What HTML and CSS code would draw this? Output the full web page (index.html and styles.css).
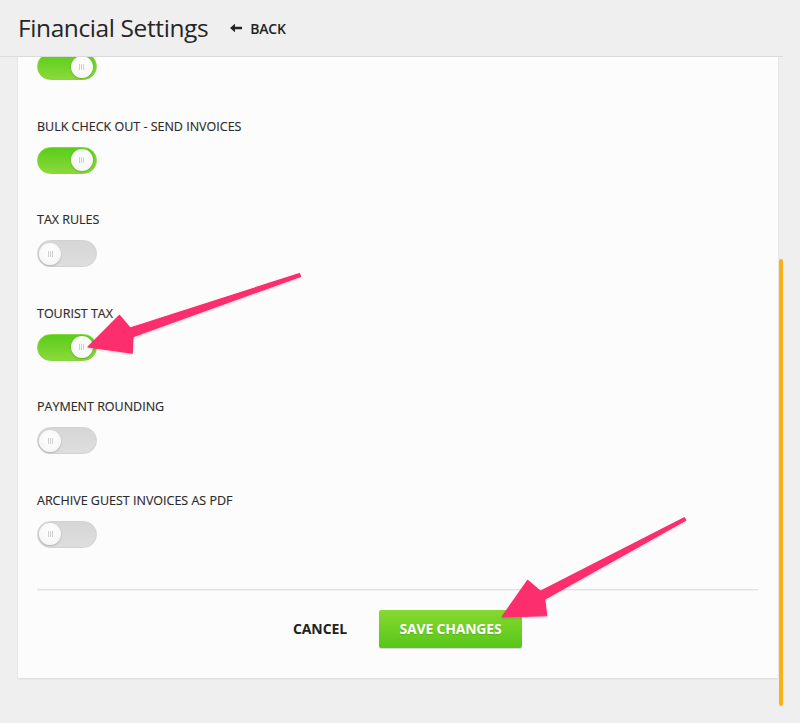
FILE: index.html
```html
<!DOCTYPE html>
<html lang="en">
<head>
<meta charset="utf-8">
<title>Financial Settings</title>
<link rel="stylesheet" href="styles.css">
</head>
<body>
<div class="page">
  <header class="topbar">
    <h1 class="title">Financial Settings</h1>
    <a class="back" href="#">
      <svg class="back-icon" width="12" height="10" viewBox="0 0 12 10"><path d="M0 5 L5 0.8 V3.8 H12 V6.2 H5 V9.2 Z" fill="#222"/></svg>
      <span>BACK</span>
    </a>
  </header>

  <main class="card">
    <div class="setting setting-clipped">
      <div class="toggle on"><span class="knob"><i></i><i></i><i></i></span></div>
    </div>
    <div class="setting">
      <div class="label">BULK CHECK OUT - SEND INVOICES</div>
      <div class="toggle on"><span class="knob"><i></i><i></i><i></i></span></div>
    </div>
    <div class="setting">
      <div class="label">TAX RULES</div>
      <div class="toggle"><span class="knob"><i></i><i></i><i></i></span></div>
    </div>
    <div class="setting">
      <div class="label">TOURIST TAX</div>
      <div class="toggle on"><span class="knob"><i></i><i></i><i></i></span></div>
    </div>
    <div class="setting">
      <div class="label">PAYMENT ROUNDING</div>
      <div class="toggle"><span class="knob"><i></i><i></i><i></i></span></div>
    </div>
    <div class="setting">
      <div class="label">ARCHIVE GUEST INVOICES AS PDF</div>
      <div class="toggle"><span class="knob"><i></i><i></i><i></i></span></div>
    </div>
    <div class="divider"></div>
    <div class="actions">
      <button class="btn-cancel" type="button">CANCEL</button>
      <button class="btn-save" type="button">SAVE CHANGES</button>
    </div>
  </main>

  <div class="scroll-thumb"></div>

  <svg class="arrows" width="800" height="723" viewBox="0 0 800 723">
    <defs>
      <filter id="sh" x="-10%" y="-10%" width="120%" height="130%">
        <feDropShadow dx="0" dy="1" stdDeviation="1" flood-color="#000" flood-opacity="0.18"/>
      </filter>
    </defs>
    <polygon filter="url(#sh)" fill="#fd2d6d" stroke="#fd2d6d" stroke-width="1.2" stroke-linejoin="round"
      points="88,347 119.4,315.3 130,328 299.5,273.6 300.5,276.4 133,336.6 132.2,353.1"/>
    <polygon filter="url(#sh)" fill="#fd2d6d" stroke="#fd2d6d" stroke-width="1.2" stroke-linejoin="round"
      points="502,617 527.7,580.4 540.4,591.2 684.3,517.7 685.7,520.3 544.6,599.2 546.7,615.6"/>
  </svg>
</div>
</body>
</html>
```
FILE: styles.css
```css
html, body {
  margin: 0;
  padding: 0;
}
body {
  background: #efefef;
  font-family: "Open Sans", "Liberation Sans", sans-serif;
  color: #333;
  width: 800px;
  height: 723px;
  overflow: hidden;
}
.page {
  position: relative;
  width: 783px;
  height: 723px;
}
.topbar {
  border-bottom: 1px solid #dcdcdc;
  display: flex;
  align-items: center;
  padding-left: 18px;
  padding-bottom: 2px;
  box-sizing: content-box;
  height: 54px;
}
.title {
  margin: 0;
  font-size: 24.5px;
  font-weight: 400;
  letter-spacing: -0.4px;
  color: #262626;
}
.back {
  display: flex;
  align-items: center;
  margin-left: 22px;
  color: #222;
  text-decoration: none;
  font-size: 14px;
  font-weight: 600;
  letter-spacing: -0.2px;
  padding-top: 2px;
}
.back-icon {
  margin-right: 8px;
}
.card {
  display: block;
  margin-left: 18px;
  width: 760px;
  box-sizing: border-box;
  padding: 0 20px 30px 19px;
  background: #fcfcfc;
  box-shadow: 0 1px 2px rgba(0, 0, 0, 0.09);
}
.setting {
  padding-top: 38.5px;
}
.setting-clipped {
  padding-top: 0;
  height: 23px;
  overflow: hidden;
  display: flex;
  align-items: flex-end;
}
.label {
  font-size: 12.5px;
  line-height: 16px;
  color: #2b2b2b;
  -webkit-text-stroke: 0.15px #2b2b2b;
}
.toggle {
  margin-top: 12px;
  width: 60px;
  height: 27px;
  box-sizing: border-box;
  border-radius: 14px;
  border: 1px solid #d2d2d2;
  background: linear-gradient(to bottom, #d6d6d6, #dedede);
  display: flex;
  align-items: center;
  padding: 0 1px;
  flex-shrink: 0;
}
.setting-clipped .toggle {
  margin-top: 0;
}
.toggle.on {
  border-color: #86d73a;
  background: linear-gradient(to bottom, #5acd1a, #8bd93b);
  justify-content: flex-end;
  padding-right: 3.5px;
}
.knob {
  width: 22px;
  height: 22px;
  border-radius: 50%;
  background: radial-gradient(circle at 50% 40%, #ffffff, #f3f3f3);
  box-shadow: 0 1px 2px rgba(0, 0, 0, 0.22);
  display: flex;
  align-items: center;
  justify-content: center;
  gap: 1px;
}
.knob i {
  display: block;
  width: 1px;
  height: 6px;
  background: #cfcfcf;
}
.divider {
  margin-top: 41px;
  height: 1px;
  background: #e2e2e2;
  box-shadow: 0 1px 0 #f0f0f0;
}
.actions {
  display: flex;
  justify-content: center;
  align-items: center;
  gap: 12px;
  padding-top: 20px;
}
.btn-cancel {
  font-family: "Open Sans", "Liberation Sans", sans-serif;
  background: none;
  border: none;
  padding: 0 20px;
  height: 38px;
  font-size: 14px;
  font-weight: 700;
  color: #222;
  letter-spacing: -0.1px;
  white-space: nowrap;
}
.btn-save {
  font-family: "Open Sans", "Liberation Sans", sans-serif;
  height: 38px;
  padding: 0;
  width: 143px;
  border: none;
  border-radius: 2px;
  background: linear-gradient(to bottom, #86d92e, #58c61a);
  box-shadow: 0 1px 1px rgba(0, 0, 0, 0.15);
  color: #fff;
  font-size: 14px;
  font-weight: 700;
  letter-spacing: -0.2px;
  white-space: nowrap;
  text-shadow: 0 1px 1px rgba(0, 0, 0, 0.15);
}
.scroll-thumb {
  position: absolute;
  left: 778.5px;
  top: 259px;
  width: 4.5px;
  height: 447px;
  border-radius: 2px;
  background: #fbb016;
}
.arrows {
  position: absolute;
  left: 0;
  top: 0;
  pointer-events: none;
}
```
